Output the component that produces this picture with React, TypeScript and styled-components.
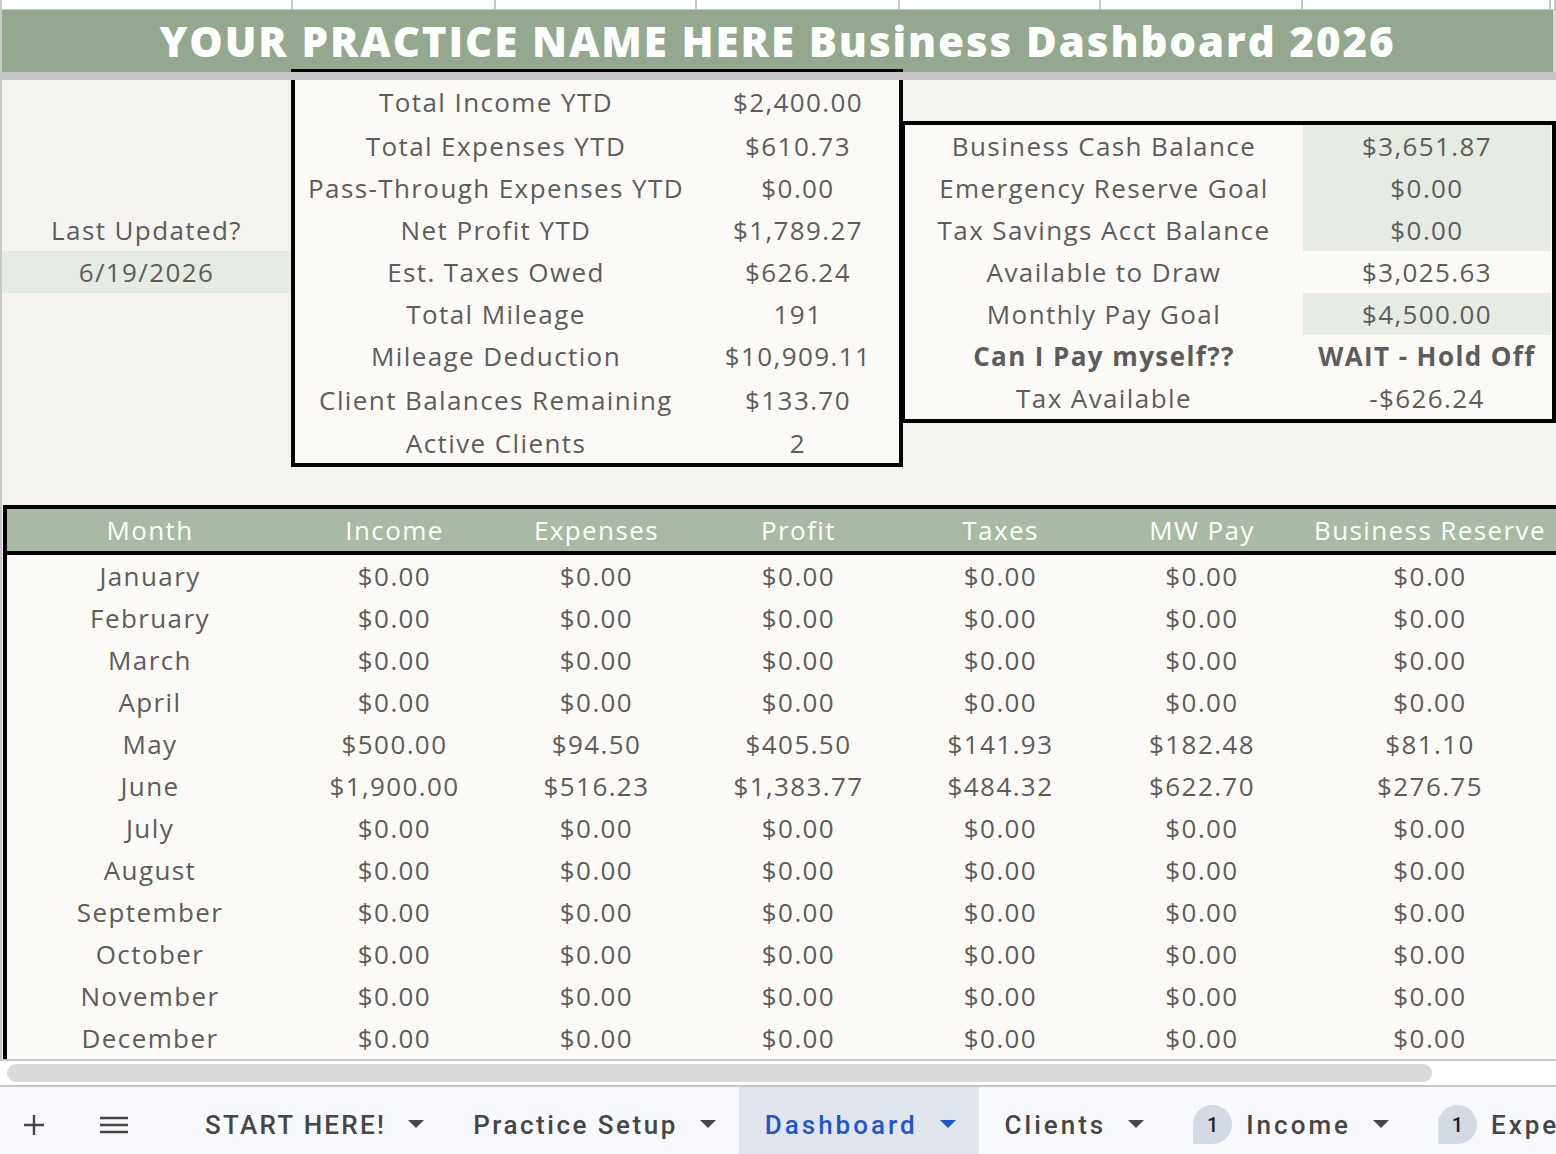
import React from 'react';
import styled, { createGlobalStyle } from 'styled-components';

const GlobalStyle = createGlobalStyle`
  html, body {
    margin: 0;
    padding: 0;
  }
  body {
    background: #ffffff;
    font-family: "Open Sans", "Noto Sans", sans-serif;
    overflow: hidden;
  }
`;

const summaryRows = [
  { label: 'Total Income YTD', value: '$2,400.00', h: 44 },
  { label: 'Total Expenses YTD', value: '$610.73', h: 43 },
  { label: 'Pass-Through Expenses YTD', value: '$0.00', h: 42 },
  { label: 'Net Profit YTD', value: '$1,789.27', h: 42 },
  { label: 'Est. Taxes Owed', value: '$626.24', h: 42 },
  { label: 'Total Mileage', value: '191', h: 42 },
  { label: 'Mileage Deduction', value: '$10,909.11', h: 42 },
  { label: 'Client Balances Remaining', value: '$133.70', h: 46 },
  { label: 'Active Clients', value: '2', h: 40 },
];

const cashRows = [
  { label: 'Business Cash Balance', value: '$3,651.87', tint: true },
  { label: 'Emergency Reserve Goal', value: '$0.00', tint: true },
  { label: 'Tax Savings Acct Balance', value: '$0.00', tint: true },
  { label: 'Available to Draw', value: '$3,025.63' },
  { label: 'Monthly Pay Goal', value: '$4,500.00', tint: true },
  { label: 'Can I Pay myself??', value: 'WAIT - Hold Off', bold: true },
  { label: 'Tax Available', value: '-$626.24' },
];

const zero = ['$0.00', '$0.00', '$0.00', '$0.00', '$0.00', '$0.00'];
const months: [string, string[]][] = [
  ['January', zero],
  ['February', zero],
  ['March', zero],
  ['April', zero],
  ['May', ['$500.00', '$94.50', '$405.50', '$141.93', '$182.48', '$81.10']],
  ['June', ['$1,900.00', '$516.23', '$1,383.77', '$484.32', '$622.70', '$276.75']],
  ['July', zero],
  ['August', zero],
  ['September', zero],
  ['October', zero],
  ['November', zero],
  ['December', zero],
];

const headers = ['Month', 'Income', 'Expenses', 'Profit', 'Taxes', 'MW Pay', 'Business Reserve'];

const tabs = [
  { name: 'START HERE!', spacing: 2.3 },
  { name: 'Practice Setup', spacing: 2.5 },
  { name: 'Dashboard', active: true, spacing: 3 },
  { name: 'Clients', spacing: 3 },
  { name: 'Income', badge: '1', spacing: 3 },
  { name: 'Expenses', badge: '1', spacing: 3 },
];

const Caret = ({ active }: { active?: boolean }) => (
  <svg width="16" height="9" viewBox="0 0 16 9">
    <path d="M0 0h16L8 8z" fill={active ? '#1f55d0' : '#444746'} />
  </svg>
);

const App = () => {
  return (
    <Sheet>
      <GlobalStyle />
      <ColumnStrip>
        {[291, 203, 201, 203, 201, 202, 248, 0].map((w, i) => (
          <StripCell key={i} $w={w} />
        ))}
      </ColumnStrip>
      <TitleBar>
        <TitleText>YOUR PRACTICE NAME HERE Business Dashboard 2026</TitleText>
        <BoxTopEdge />
      </TitleBar>
      <FreezeLine />
      <Summary>
        <UpdatedPanel>
          <UpdatedRow>Last Updated?</UpdatedRow>
          <UpdatedRow $tint>6/19/2026</UpdatedRow>
        </UpdatedPanel>
        <TotalsBox>
          {summaryRows.map((r) => (
            <TotalsRow key={r.label} $h={r.h}>
              <Cell>{r.label}</Cell>
              <Cell>{r.value}</Cell>
            </TotalsRow>
          ))}
        </TotalsBox>
        <CashBox>
          {cashRows.map((r) => (
            <CashRow key={r.label}>
              <Cell $bold={r.bold}>{r.label}</Cell>
              <Cell $bold={r.bold} $tint={r.tint}>
                {r.value}
              </Cell>
            </CashRow>
          ))}
        </CashBox>
      </Summary>
      <TableArea>
        <MonthTable>
          <HeadRow>
            {headers.map((h) => (
              <HeadCell key={h}>{h}</HeadCell>
            ))}
          </HeadRow>
          {months.map(([m, vals]) => (
            <BodyRow key={m}>
              <Cell>{m}</Cell>
              {vals.map((v, i) => (
                <Cell key={i}>{v}</Cell>
              ))}
            </BodyRow>
          ))}
        </MonthTable>
      </TableArea>
      <ScrollTrack>
        <ScrollThumb />
      </ScrollTrack>
      <TabBar>
        <PlusButton>
          <svg width="20" height="20" viewBox="0 0 20 20">
            <path d="M10 0v20M0 10h20" stroke="#444746" strokeWidth="2.4" />
          </svg>
        </PlusButton>
        <MenuButton>
          <svg width="28" height="18" viewBox="0 0 28 18">
            <path d="M0 2h28M0 9h28M0 16h28" stroke="#444746" strokeWidth="2.6" />
          </svg>
        </MenuButton>
        <TabList>
          {tabs.map((t) => (
            <Tab key={t.name} $active={t.active}>
              {t.badge && <Badge>{t.badge}</Badge>}
              <TabName $active={t.active} $spacing={t.spacing}>
                {t.name}
              </TabName>
              <Caret active={t.active} />
            </Tab>
          ))}
        </TabList>
      </TabBar>
    </Sheet>
  );
};

export default App;

const Sheet = styled.div`
  width: 1556px;
  height: 1154px;
  display: flex;
  flex-direction: column;
  overflow: hidden;
  color: #5c5c5c;
`;

const ColumnStrip = styled.div`
  height: 9px;
  display: flex;
  border-left: 2px solid #c8c8c8;
  border-bottom: 1px solid #c8c8c8;
  background: #fff;
`;

const StripCell = styled.div<{ $w: number }>`
  width: ${(p) => (p.$w ? `${p.$w - 2}px` : 'auto')};
  flex: ${(p) => (p.$w ? 'none' : '1')};
  border-right: 2px solid #c8c8c8;
`;

const TitleBar = styled.div`
  height: 62px;
  display: flex;
  flex-direction: column;
  background: #94a78f;
  border-left: 2px solid #c8c8c8;
  border-right: 3px solid #d8d8d8;
`;

const TitleText = styled.div`
  flex: 1;
  display: flex;
  align-items: center;
  justify-content: center;
  padding-top: 2px;
  color: #ffffff;
  font-size: 42px;
  font-weight: 800;
  letter-spacing: 1.9px;
  white-space: nowrap;
`;

const BoxTopEdge = styled.div`
  height: 3px;
  width: 612px;
  margin-left: 289px;
  background: #000;
`;

const FreezeLine = styled.div`
  height: 8px;
  background: #c5c5c5;
`;

const Summary = styled.div`
  height: 425px;
  display: grid;
  grid-template-columns: 289px 612px 1fr;
  align-items: start;
  background: #f5f3ef;
  border-left: 2px solid #c8c8c8;
`;

const UpdatedPanel = styled.div`
  padding-top: 129px;
  display: flex;
  flex-direction: column;
`;

const UpdatedRow = styled.div<{ $tint?: boolean }>`
  height: 42px;
  display: flex;
  align-items: center;
  justify-content: center;
  font-size: 26px;
  letter-spacing: 1.4px;
  background: ${(p) => (p.$tint ? '#e6ebe4' : 'transparent')};
`;

const TotalsBox = styled.div`
  border: 4px solid #000;
  border-top: none;
  background: #fbfaf7;
`;

const TotalsRow = styled.div<{ $h: number }>`
  height: ${(p) => p.$h}px;
  display: grid;
  grid-template-columns: 402px 1fr;
`;

const Cell = styled.div<{ $bold?: boolean; $tint?: boolean }>`
  display: flex;
  align-items: center;
  justify-content: center;
  font-size: 26px;
  letter-spacing: 1.4px;
  font-weight: ${(p) => (p.$bold ? 700 : 400)};
  white-space: nowrap;
  background: ${(p) => (p.$tint ? '#e6ebe4' : 'transparent')};
`;

const CashBox = styled.div`
  margin-top: 41px;
  margin-left: -2px;
  border: 4px solid #000;
  background: #fbfaf7;
`;

const CashRow = styled.div`
  height: 42px;
  display: grid;
  grid-template-columns: 398px 248px;
`;

const TableArea = styled.div`
  flex: 1;
  overflow: hidden;
  background: #f5f3ef;
  border-left: 2px solid #c8c8c8;
  padding-left: 1px;
`;

const MonthTable = styled.div`
  width: 1550px;
  border: 4px solid #000;
  border-bottom: none;
  background: #fbfaf7;
`;

const columns = '286px 203px 201px 203px 201px 202px 1fr';

const HeadRow = styled.div`
  height: 42px;
  display: grid;
  grid-template-columns: ${columns};
  background: #aab9a3;
  border-bottom: 4px solid #000;
`;

const HeadCell = styled.div`
  display: flex;
  align-items: center;
  justify-content: center;
  color: #ffffff;
  font-size: 26px;
  letter-spacing: 1.4px;
  white-space: nowrap;
`;

const BodyRow = styled.div`
  height: 42px;
  display: grid;
  grid-template-columns: ${columns};
`;

const ScrollTrack = styled.div`
  height: 24px;
  flex: none;
  display: flex;
  align-items: center;
  padding-left: 7px;
  border-top: 2px solid #c7c7c7;
  border-bottom: 2px solid #c7c7c7;
  background: #fff;
`;

const ScrollThumb = styled.div`
  width: 1425px;
  height: 18px;
  border-radius: 9px;
  background: #dadada;
`;

const TabBar = styled.div`
  height: 67px;
  flex: none;
  display: flex;
  align-items: center;
  background: #f8f9fc;
  font-family: Roboto, "Open Sans", sans-serif;
`;

const PlusButton = styled.div`
  display: flex;
  margin: 8px 0 0 24px;
`;

const MenuButton = styled.div`
  display: flex;
  margin: 8px 0 0 56px;
`;

const TabList = styled.div`
  display: flex;
  align-items: stretch;
  height: 100%;
  margin-left: 51px;
`;

const Tab = styled.div<{ $active?: boolean }>`
  display: flex;
  align-items: center;
  gap: 22px;
  padding: 8px 23px 0 26px;
  background: ${(p) => (p.$active ? '#e1e5ed' : 'transparent')};
  white-space: nowrap;
`;

const TabName = styled.span<{ $active?: boolean; $spacing: number }>`
  font-size: 26px;
  font-weight: 500;
  letter-spacing: ${(p) => p.$spacing}px;
  color: ${(p) => (p.$active ? '#1f55d0' : '#444746')};
`;

const Badge = styled.span`
  width: 39px;
  height: 39px;
  margin-right: -8px;
  display: flex;
  align-items: center;
  justify-content: center;
  border-radius: 20px 20px 20px 0;
  background: #d3dae3;
  color: #1f1f1f;
  font-size: 20px;
  font-weight: 500;
`;
